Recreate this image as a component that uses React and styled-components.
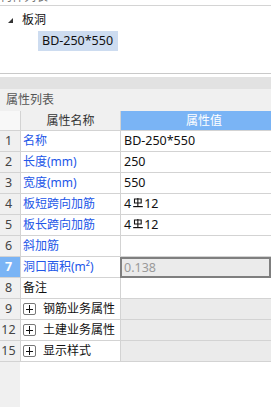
import React from "react";
import styled, { createGlobalStyle } from "styled-components";

const GlobalStyle = createGlobalStyle`
	html, body {
		margin: 0;
		padding: 0;
		background: #fff;
	}
	body {
		font-family: "Noto Sans", "Noto Sans CJK SC", sans-serif;
		font-size: 12px;
		color: #111;
	}
`;

const rows = [
	{ no: "1", name: "名称", value: "BD-250*550" },
	{ no: "2", name: "长度(mm)", value: "250" },
	{ no: "3", name: "宽度(mm)", value: "550" },
	{ no: "4", name: "板短跨向加筋", value: "rebar" },
	{ no: "5", name: "板长跨向加筋", value: "rebar" },
	{ no: "6", name: "斜加筋", value: "" },
	{ no: "7", name: "洞口面积(m²)", value: "0.138", selected: true },
	{ no: "8", name: "备注", value: "", plain: true },
];

const groups = [
	{ no: "9", name: "钢筋业务属性" },
	{ no: "12", name: "土建业务属性" },
	{ no: "15", name: "显示样式" },
];

function RebarMark() {
	return (
		<Mark width="10" height="10" viewBox="0 0 10 10">
			<path d="M1.5 5 V1 H8.2 V5 Z" fill="none" stroke="#111" strokeWidth="1.1" />
			<path d="M4.85 0 V9" stroke="#111" strokeWidth="1.1" />
			<path d="M0.2 8.6 H9.8" stroke="#111" strokeWidth="1.2" />
		</Mark>
	);
}

function App() {
	return (
		<Page>
			<GlobalStyle />
			<TopStrip>
				<span>构件列表</span>
			</TopStrip>
			<Tree>
				<TreeNode>
					<svg width="5" height="5" viewBox="0 0 5 5">
						<path d="M5 0 V5 H0 Z" fill="#333" />
					</svg>
					<span>板洞</span>
				</TreeNode>
				<TreeLeaf>BD-250*550</TreeLeaf>
			</Tree>
			<Splitter />
			<PanelTitle>属性列表</PanelTitle>
			<Row header>
				<NoCell header />
				<HeadCell>属性名称</HeadCell>
				<HeadCell active>属性值</HeadCell>
			</Row>
			{rows.map((r) => (
				<Row key={r.no}>
					<NoCell selected={r.selected}>{r.no}</NoCell>
					<NameCell plain={r.plain}>{r.name}</NameCell>
					<ValueCell selected={r.selected}>
						{r.value === "rebar" ? (
							<>
								4<RebarMark />12
							</>
						) : (
							r.value
						)}
					</ValueCell>
				</Row>
			))}
			{groups.map((g) => (
				<Row key={g.no}>
					<NoCell>{g.no}</NoCell>
					<NameCell plain>
						<PlusBox />
						{g.name}
					</NameCell>
					<ValueCell group />
				</Row>
			))}
			<Filler>
				<FillerNo />
				<div />
			</Filler>
		</Page>
	);
}

export default App;

const Page = styled.div`
	height: 100vh;
	display: flex;
	flex-direction: column;
	overflow: hidden;
`;

const TopStrip = styled.div`
	height: 5px;
	flex: none;
	overflow: hidden;
	display: flex;
	align-items: flex-end;
	border-bottom: 1px solid #d4d4d4;
	color: #777;
	span {
		line-height: 12px;
		margin-bottom: 2px;
	}
`;

const Tree = styled.div`
	height: 68px;
	flex: none;
	border-bottom: 1px solid #c9c9c9;
	padding-top: 4px;
	box-sizing: border-box;
`;

const TreeNode = styled.div`
	display: flex;
	align-items: center;
	gap: 9px;
	height: 18px;
	padding-left: 8px;
	font-size: 12px;
	svg {
		margin-top: 2px;
	}
`;

const TreeLeaf = styled.div`
	display: inline-block;
	margin: 3px 0 0 38px;
	height: 20px;
	line-height: 20px;
	padding: 0 5px 0 4px;
	background: #cddcf0;
	font-size: 12.5px;
`;

const Splitter = styled.div`
	flex: none;
	height: 12px;
	margin-top: 3px;
	background: #e2e2e2;
`;

const PanelTitle = styled.div`
	flex: none;
	height: 22px;
	line-height: 22px;
	padding-left: 6px;
	background: #f0f0f0;
	color: #555;
	font-size: 12px;
`;

const Row = styled.div`
	flex: none;
	display: grid;
	grid-template-columns: 21px 100px 1fr;
	height: ${(p) => (p.header ? "20px" : "21px")};
	box-sizing: border-box;
	border-bottom: 1px solid #d3d3d3;
	line-height: 20px;
`;

const NoCell = styled.div`
	background: ${(p) => (p.selected ? "#7ab4f5" : p.header ? "#f8f8f8" : "#f0f0f0")};
	color: ${(p) => (p.selected ? "#fff" : "#444")};
	font-weight: ${(p) => (p.selected ? "bold" : "normal")};
	border-right: 1px solid #d3d3d3;
	text-align: center;
	padding-right: 3px;
	font-size: 12.5px;
`;

const HeadCell = styled.div`
	background: ${(p) => (p.active ? "#7ab4f5" : "#f0f0f0")};
	color: ${(p) => (p.active ? "#fff" : "#333")};
	border-right: ${(p) => (p.active ? "none" : "1px solid #d3d3d3")};
	text-align: center;
	padding-left: ${(p) => (p.active ? "16px" : "0")};
	line-height: 19px;
`;

const NameCell = styled.div`
	display: flex;
	align-items: center;
	padding-left: 2px;
	color: ${(p) => (p.plain ? "#111" : "#2256e8")};
	border-right: 1px solid #d3d3d3;
	white-space: nowrap;
`;

const ValueCell = styled.div`
	display: flex;
	align-items: center;
	white-space: nowrap;
	font-size: 12.5px;
	background: ${(p) => (p.selected || p.group ? "#ebebeb" : "#fff")};
	color: ${(p) => (p.selected ? "#9a9a9a" : "#111")};
	box-shadow: ${(p) => (p.selected ? "inset 0 0 0 2px #7f7f7f" : "none")};
	margin-bottom: ${(p) => (p.selected ? "-1px" : "0")};
	margin-left: ${(p) => (p.selected ? "-1px" : "0")};
	padding-left: ${(p) => (p.selected ? "4px" : "3px")};
`;

const Mark = styled.svg`
	margin: -3px 1px 0 2px;
`;

const PlusBox = styled.span`
	position: relative;
	width: 11px;
	height: 10px;
	border: 1px solid #777;
	border-radius: 2px;
	margin: 0 7px 0 0;
	flex: none;
	&::before,
	&::after {
		content: "";
		position: absolute;
		background: #111;
	}
	&::before {
		left: 2px;
		right: 2px;
		top: 4.5px;
		height: 1px;
	}
	&::after {
		top: 1px;
		bottom: 1px;
		left: 5px;
		width: 1px;
	}
`;

const Filler = styled.div`
	flex: 1;
	display: grid;
	grid-template-columns: 20px 1fr;
`;

const FillerNo = styled.div`
	background: #f0f0f0;
`;
